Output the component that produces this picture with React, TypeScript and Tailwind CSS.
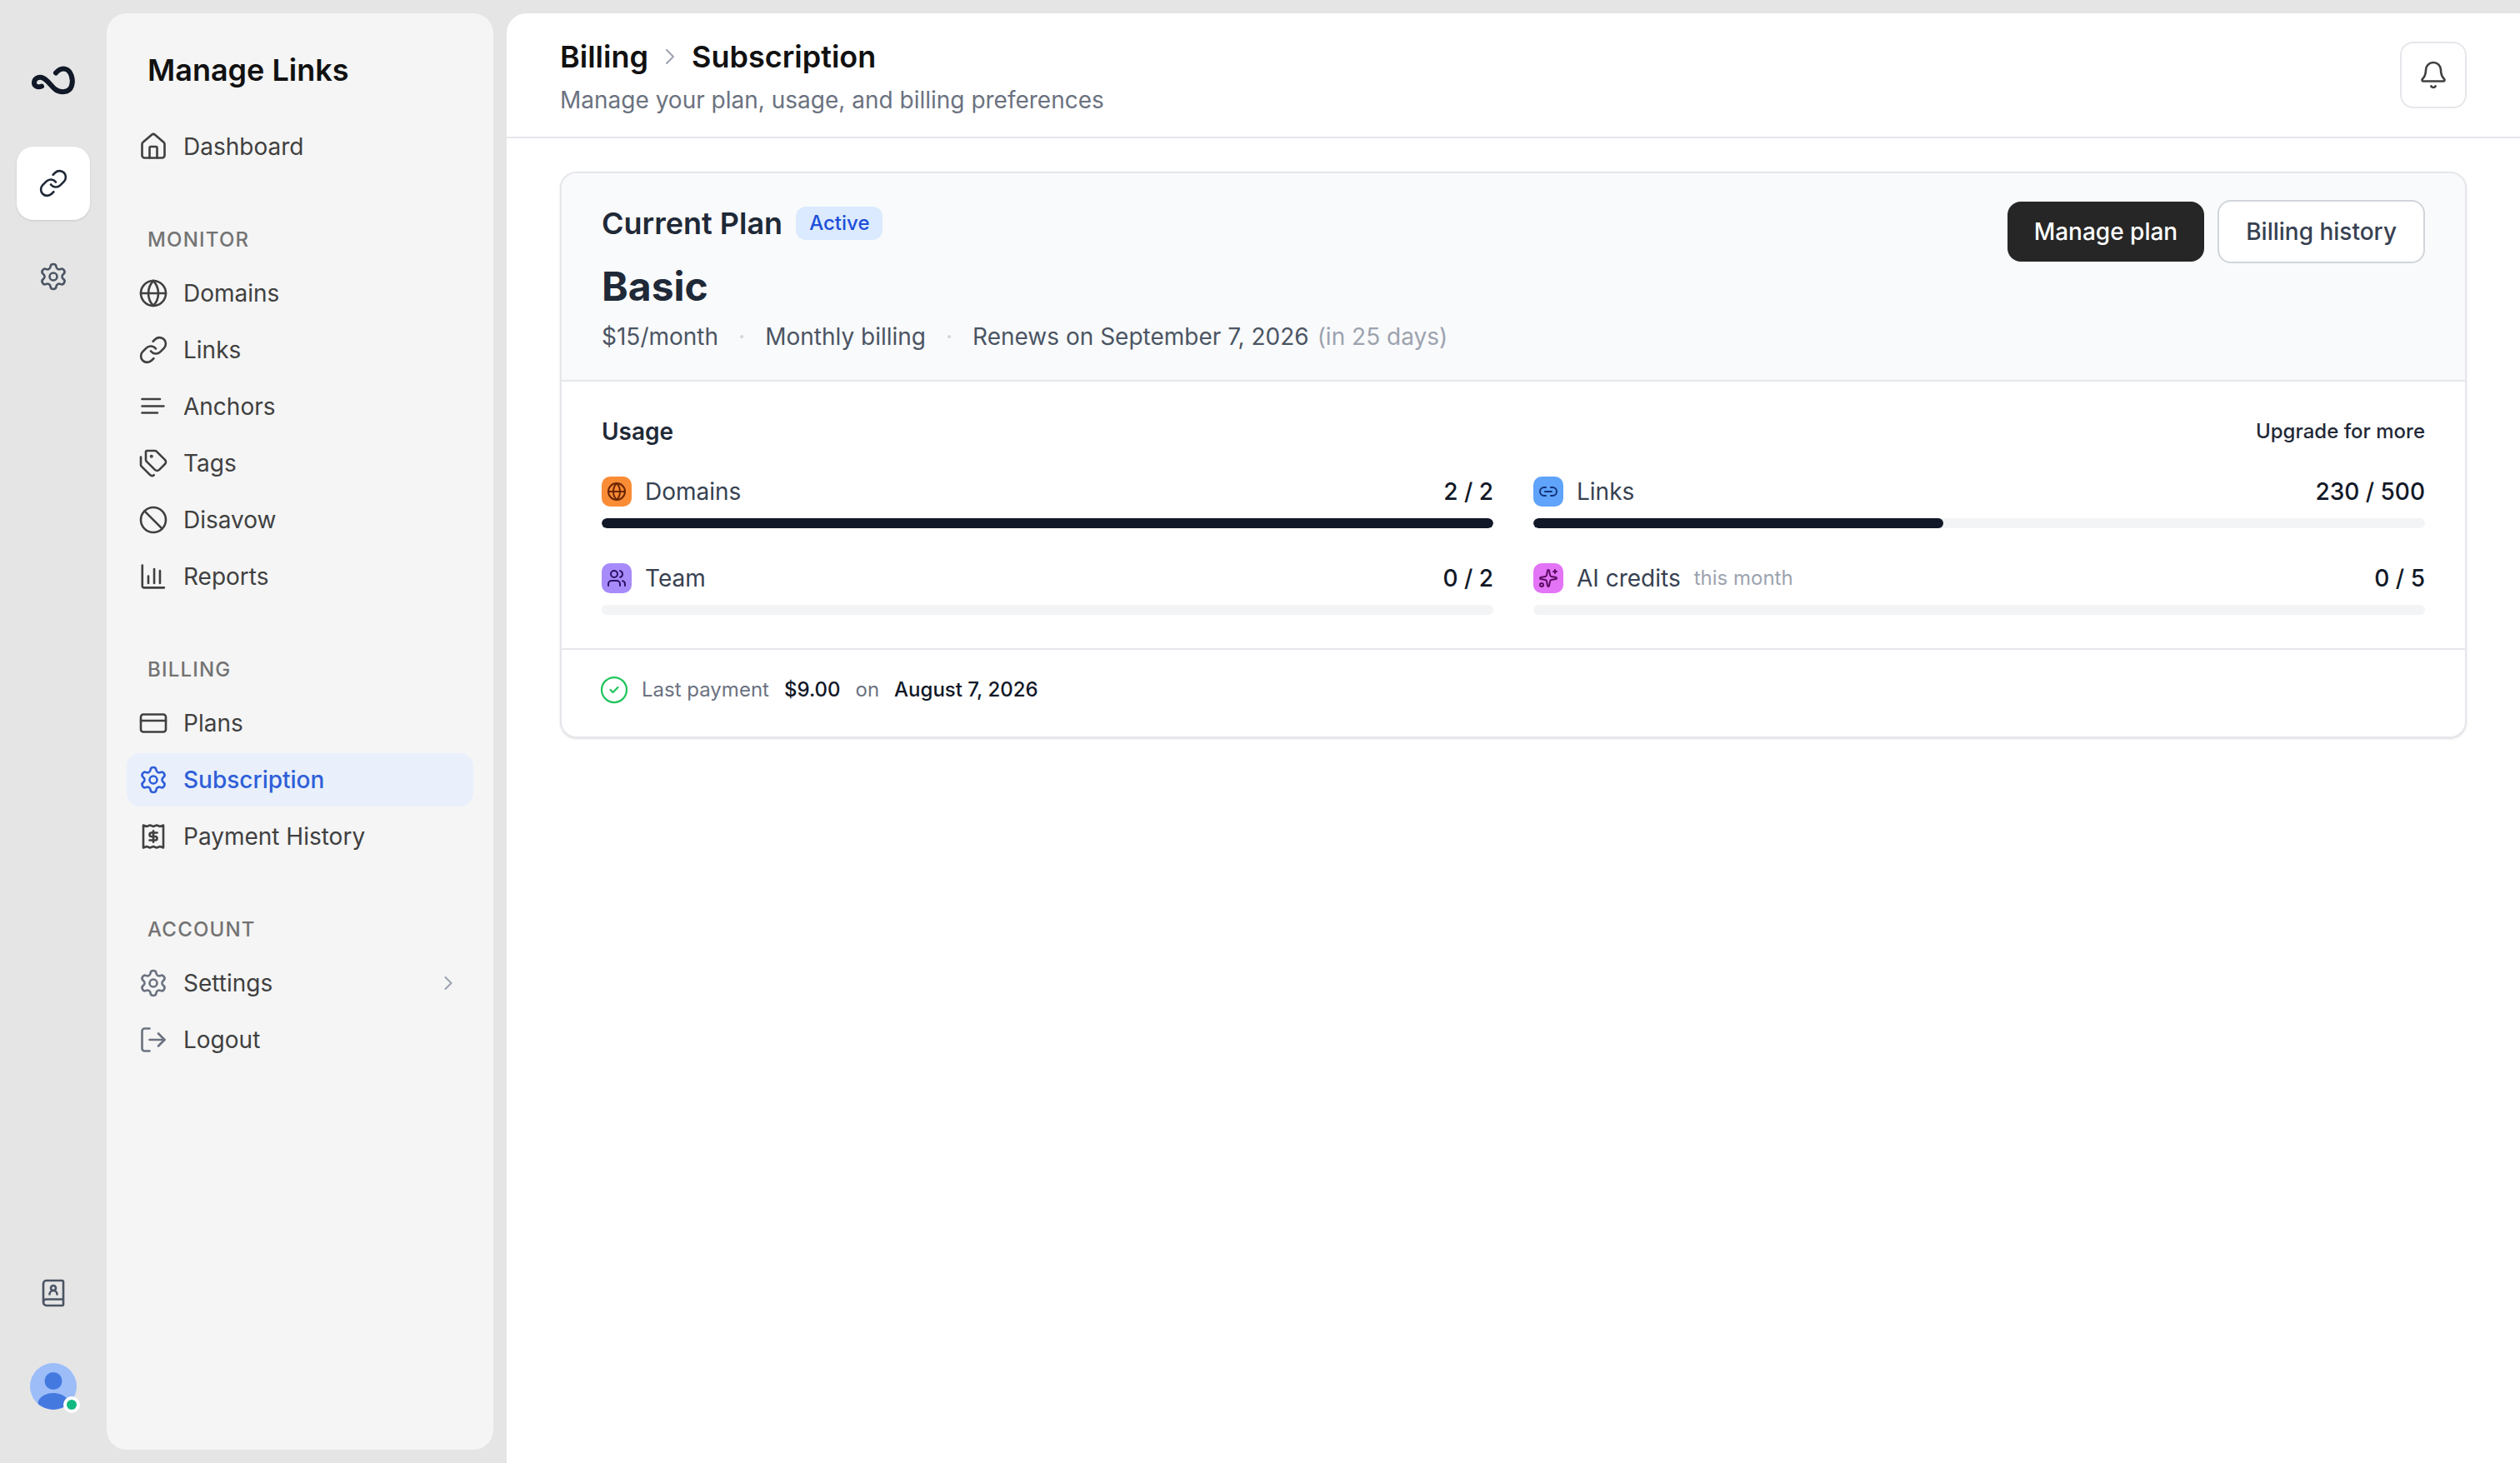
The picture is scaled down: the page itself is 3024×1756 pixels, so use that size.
import React from 'react';
import {
  Ban,
  Bell,
  BookUser,
  ChevronRight,
  CircleCheck,
  CreditCard,
  Globe,
  House,
  Link,
  Link2,
  LogOut,
  Settings,
  Sparkles,
  Tags,
  Users,
} from 'lucide-react';

function AnchorsIcon({ size = 36 }: { size?: number }) {
  return (
    <svg width={size} height={size} viewBox="0 0 24 24" fill="none" stroke="currentColor" strokeWidth="1.75" strokeLinecap="round">
      <path d="M3 6h14.3M3 11.7h17.3M3 17h12.3" />
    </svg>
  );
}

function ReportsIcon({ size = 36 }: { size?: number }) {
  return (
    <svg width={size} height={size} viewBox="0 0 24 24" fill="none" stroke="currentColor" strokeWidth="1.75" strokeLinecap="round" strokeLinejoin="round">
      <path d="M3.2 3v16.9a1 1 0 0 0 1 1h16.4M8 11.7v5.6M12.7 6v11.3M17.3 7.3v10" />
    </svg>
  );
}

function ReceiptIcon({ size = 36 }: { size?: number }) {
  return (
    <svg width={size} height={size} viewBox="0 0 24 24" fill="none" stroke="currentColor" strokeWidth="1.75" strokeLinecap="round" strokeLinejoin="round">
      <path d="M4 3l2.67 1 2.67-1 2.66 1 2.67-1 2.67 1L20 3v18l-2.67-1-2.67 1-2.66-1-2.67 1-2.67-1L4 21z" />
      <path d="M15 9h-4.5a1.5 1.5 0 0 0 0 3h3a1.5 1.5 0 0 1 0 3H9M12 7.5v9" />
    </svg>
  );
}

function Logo() {
  return (
    <svg width="56" height="40" viewBox="0 0 56 40" fill="none">
      <path d="M14 27.5C9 29.5 5 27 5 23.5C5 19 9 16 14 17C20 18.2 25 27 30 31C36 35.5 47 36 50 27C52.5 19 49 9 43 7C38.5 5.6 34 8 31 11.5" stroke="#111827" strokeWidth="6" strokeLinecap="round" />
    </svg>
  );
}

function Avatar() {
  return (
    <div className="relative w-14 h-14">
      <svg width="56" height="56" viewBox="0 0 56 56">
        <defs>
          <clipPath id="avatar-clip">
            <circle cx="28" cy="28" r="28" />
          </clipPath>
        </defs>
        <circle cx="28" cy="28" r="28" fill="#9dbdf9" />
        <g clipPath="url(#avatar-clip)" fill="#4479e0">
          <circle cx="28" cy="21.5" r="10.5" />
          <ellipse cx="28" cy="49" rx="18.5" ry="13" />
        </g>
      </svg>
      <span className="absolute right-[-4px] bottom-[-4px] w-5 h-5 rounded-full bg-white flex items-center justify-center">
        <span className="w-3 h-3 rounded-full bg-[#10b981]" />
      </span>
    </div>
  );
}

function NavItem({
  icon,
  label,
  active,
  chevron,
}: {
  icon: React.ReactNode;
  label: string;
  active?: boolean;
  chevron?: boolean;
}) {
  return (
    <a
      className={`h-16 rounded-2xl pl-[14px] pr-4 flex items-center gap-[18px] text-[28px] ${
        active ? 'bg-[#e9f0fb] text-[#2f5fd8] font-medium' : 'text-[#404040]'
      }`}
    >
      {icon}
      <span className="flex-1">{label}</span>
      {chevron && <ChevronRight size={28} strokeWidth={1.75} className="text-[#9ca3af]" />}
    </a>
  );
}

function SectionLabel({ children }: { children: React.ReactNode }) {
  return (
    <div className="mt-16 mb-4 h-8 pl-[25px] flex items-center text-[24px] font-medium tracking-[1.2px] text-[#737373]">
      {children}
    </div>
  );
}

function UsageItem({
  icon,
  iconClass,
  label,
  note,
  value,
  percent,
}: {
  icon: React.ReactNode;
  iconClass: string;
  label: string;
  note?: string;
  value: string;
  percent: number;
}) {
  return (
    <div>
      <div className="h-10 mb-3 flex items-center justify-between">
        <div className="flex items-center gap-4">
          <span className={`w-9 h-9 rounded-[10px] flex items-center justify-center ${iconClass}`}>{icon}</span>
          <span className="text-[28px] text-[#374151]">{label}</span>
          {note && <span className="text-[24px] text-[#9ca3af]">{note}</span>}
        </div>
        <span className="text-[28px] font-medium text-[#111827]">{value}</span>
      </div>
      <div className="h-3 rounded-full bg-[#f3f4f6] overflow-hidden">
        <div className="h-full rounded-full bg-[#111827]" style={{ width: `${percent}%` }} />
      </div>
    </div>
  );
}

export default function App() {
  return (
    <div className="w-screen h-screen flex overflow-hidden bg-[#e5e5e5] font-['Inter',sans-serif]">
      {/* icon rail */}
      <div className="w-32 shrink-0 flex flex-col items-center pt-[52px] pb-16">
        <div className="w-[88px] h-[88px] flex items-center justify-center mb-9">
          <Logo />
        </div>
        <button className="w-[88px] h-[88px] rounded-[20px] bg-white shadow-sm flex items-center justify-center text-[#1f2937] mb-6">
          <Link size={36} strokeWidth={1.75} />
        </button>
        <button className="w-[88px] h-[88px] flex items-center justify-center text-[#4b5563]">
          <Settings size={36} strokeWidth={1.75} />
        </button>
        <button className="mt-auto w-[88px] h-[88px] flex items-center justify-center text-[#4b5563] mb-10">
          <BookUser size={36} strokeWidth={1.75} />
        </button>
        <Avatar />
      </div>

      {/* section sidebar */}
      <aside className="w-[464px] shrink-0 my-4 mr-4 rounded-3xl bg-[#f5f5f5] px-6 pt-10">
        <h1 className="h-14 pl-[25px] flex items-center text-[36px] font-semibold text-[#111111]">Manage Links</h1>
        <nav className="mt-8 flex flex-col gap-1">
          <NavItem icon={<House size={36} strokeWidth={1.75} />} label="Dashboard" />
        </nav>
        <SectionLabel>MONITOR</SectionLabel>
        <nav className="flex flex-col gap-1">
          <NavItem icon={<Globe size={36} strokeWidth={1.75} />} label="Domains" />
          <NavItem icon={<Link size={36} strokeWidth={1.75} />} label="Links" />
          <NavItem icon={<AnchorsIcon />} label="Anchors" />
          <NavItem icon={<Tags size={36} strokeWidth={1.75} />} label="Tags" />
          <NavItem icon={<Ban size={36} strokeWidth={1.75} />} label="Disavow" />
          <NavItem icon={<ReportsIcon />} label="Reports" />
        </nav>
        <SectionLabel>BILLING</SectionLabel>
        <nav className="flex flex-col gap-1">
          <NavItem icon={<CreditCard size={36} strokeWidth={1.75} />} label="Plans" />
          <NavItem icon={<Settings size={36} strokeWidth={1.75} />} label="Subscription" active />
          <NavItem icon={<ReceiptIcon />} label="Payment History" />
        </nav>
        <SectionLabel>ACCOUNT</SectionLabel>
        <nav className="flex flex-col gap-1">
          <NavItem icon={<Settings size={36} strokeWidth={1.75} className="text-[#6b7280]" />} label="Settings" chevron />
          <NavItem icon={<LogOut size={36} strokeWidth={1.75} className="text-[#6b7280]" />} label="Logout" />
        </nav>
      </aside>

      {/* main */}
      <main className="flex-1 mt-4 bg-white rounded-tl-3xl">
        <header className="h-[150px] border-b-2 border-[#e5e7eb] pl-16 pr-16 flex items-center justify-between">
          <div>
            <div className="h-14 flex items-center text-[36px] font-semibold text-[#111111]">
              <span>Billing</span>
              <ChevronRight size={32} strokeWidth={1.5} className="mx-[10px] text-[#9ca3af]" />
              <span>Subscription</span>
            </div>
            <p className="h-10 mt-1 flex items-center text-[28px] text-[#6b7280]">Manage your plan, usage, and billing preferences</p>
          </div>
          <button className="w-20 h-20 rounded-2xl border-2 border-[#e5e7eb] bg-white flex items-center justify-center text-[#404040]">
            <Bell size={36} strokeWidth={1.75} />
          </button>
        </header>

        <section className="mx-16 mt-10 rounded-[20px] border-2 border-[#e5e7eb] bg-white shadow-sm overflow-hidden">
          <div className="bg-[#f9fafb] border-b-2 border-[#e5e7eb] px-12 pt-8 pb-8 flex items-start justify-between">
            <div>
              <div className="h-14 flex items-center gap-4">
                <h2 className="text-[36px] font-semibold text-[#1f2937]">Current Plan</h2>
                <span className="h-10 px-4 rounded-xl bg-[#dbeafe] text-[#1d4ed8] text-[24px] font-medium flex items-center">Active</span>
              </div>
              <div className="h-16 mt-4 flex items-center text-[48px] font-bold text-[#1f2937]">Basic</div>
              <div className="h-10 mt-2 flex items-center text-[28px] text-[#4b5563]">
                <span>$15/month</span>
                <span className="mx-6 text-[#d1d5db]">·</span>
                <span>Monthly billing</span>
                <span className="mx-6 text-[#d1d5db]">·</span>
                <span>Renews on September 7, 2026</span>
                <span className="ml-[10px] text-[#9ca3af]">(in 25 days)</span>
              </div>
            </div>
            <div className="flex items-center gap-4">
              <button className="h-[72px] px-8 rounded-2xl bg-[#262626] text-white text-[28px] font-medium">Manage plan</button>
              <button className="h-[76px] px-8 rounded-2xl border-2 border-[#d1d5db] bg-white text-[#374151] text-[28px] font-medium">Billing history</button>
            </div>
          </div>

          <div className="px-12 py-10 border-b-2 border-[#e5e7eb]">
            <div className="h-10 mb-8 flex items-center justify-between">
              <h3 className="text-[28px] font-semibold text-[#1f2937]">Usage</h3>
              <a className="text-[24px] font-medium text-[#1f2937]">Upgrade for more</a>
            </div>
            <div className="grid grid-cols-2 gap-x-12 gap-y-10">
              <UsageItem
                icon={<Globe size={24} strokeWidth={2} className="text-[#6b2500]" />}
                iconClass="bg-[#fb8c36]"
                label="Domains"
                value="2 / 2"
                percent={100}
              />
              <UsageItem
                icon={<Link2 size={24} strokeWidth={2} className="text-[#12327a]" />}
                iconClass="bg-[#5fa3fa]"
                label="Links"
                value="230 / 500"
                percent={46}
              />
              <UsageItem
                icon={<Users size={24} strokeWidth={2} className="text-[#2e1065]" />}
                iconClass="bg-[#a78bfa]"
                label="Team"
                value="0 / 2"
                percent={0}
              />
              <UsageItem
                icon={<Sparkles size={24} strokeWidth={2} className="text-[#5b0a63]" />}
                iconClass="bg-[#e274f5]"
                label="AI credits"
                note="this month"
                value="0 / 5"
                percent={0}
              />
            </div>
          </div>

          <div className="px-12 pt-8 pb-10 flex items-center h-[104px] text-[24px] text-[#6b7280]">
            <CircleCheck size={36} strokeWidth={1.5} className="text-[#22c55e] -ml-[3px] mr-[15px]" />
            <span>Last payment</span>
            <span className="ml-[18px] font-medium text-[#111827]">$9.00</span>
            <span className="ml-[18px]">on</span>
            <span className="ml-[18px] font-medium text-[#111827]">August 7, 2026</span>
          </div>
        </section>
      </main>
    </div>
  );
}
